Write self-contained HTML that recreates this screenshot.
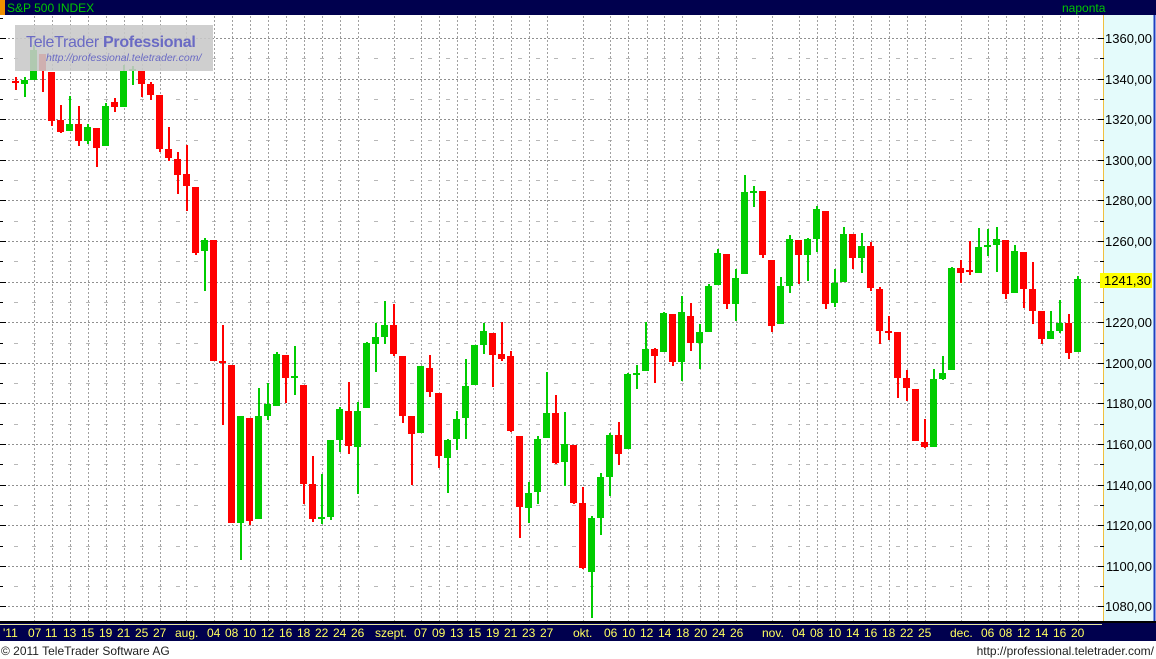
<!DOCTYPE html>
<html><head><meta charset="utf-8"><style>
html,body{margin:0;padding:0;background:#fff;width:1156px;height:659px;overflow:hidden;font-family:"Liberation Sans",sans-serif}
svg{display:block}
</style></head><body>
<svg width="1156" height="659" viewBox="0 0 1156 659" xmlns="http://www.w3.org/2000/svg" font-family="Liberation Sans, sans-serif">
<rect x="0" y="0" width="1156" height="659" fill="#fff"/>
<rect x="0" y="0" width="1156" height="15" fill="#00004e"/>
<rect x="0" y="0" width="5" height="15" fill="#f09000"/>
<text x="7" y="12" font-size="12" fill="#00c800">S&amp;P 500 INDEX</text>
<text x="1062" y="12" font-size="12" fill="#00c800">naponta</text>
<rect x="1103" y="15" width="51" height="607" fill="#e4fbfb"/>
<line x1="1103.5" y1="15" x2="1103.5" y2="622" stroke="#f0c040" stroke-width="1"/>
<line x1="1154.5" y1="15" x2="1154.5" y2="622" stroke="#2040c0" stroke-width="2"/>
<g stroke="#909090" stroke-width="1" stroke-dasharray="2,2">
<line x1="4" y1="38.5" x2="1098" y2="38.5"/><line x1="4" y1="79.5" x2="1098" y2="79.5"/><line x1="4" y1="119.5" x2="1098" y2="119.5"/><line x1="4" y1="160.5" x2="1098" y2="160.5"/><line x1="4" y1="200.5" x2="1098" y2="200.5"/><line x1="4" y1="241.5" x2="1098" y2="241.5"/><line x1="4" y1="282.5" x2="1098" y2="282.5"/><line x1="4" y1="322.5" x2="1098" y2="322.5"/><line x1="4" y1="363.5" x2="1098" y2="363.5"/><line x1="4" y1="403.5" x2="1098" y2="403.5"/><line x1="4" y1="444.5" x2="1098" y2="444.5"/><line x1="4" y1="485.5" x2="1098" y2="485.5"/><line x1="4" y1="525.5" x2="1098" y2="525.5"/><line x1="4" y1="566.5" x2="1098" y2="566.5"/><line x1="4" y1="606.5" x2="1098" y2="606.5"/>
</g>
<g stroke="#b8b8b8" stroke-width="1" stroke-dasharray="4,14">
<line x1="14" y1="58.5" x2="1098" y2="58.5"/><line x1="14" y1="99.5" x2="1098" y2="99.5"/><line x1="14" y1="140.5" x2="1098" y2="140.5"/><line x1="14" y1="180.5" x2="1098" y2="180.5"/><line x1="14" y1="221.5" x2="1098" y2="221.5"/><line x1="14" y1="261.5" x2="1098" y2="261.5"/><line x1="14" y1="302.5" x2="1098" y2="302.5"/><line x1="14" y1="343.5" x2="1098" y2="343.5"/><line x1="14" y1="383.5" x2="1098" y2="383.5"/><line x1="14" y1="424.5" x2="1098" y2="424.5"/><line x1="14" y1="464.5" x2="1098" y2="464.5"/><line x1="14" y1="505.5" x2="1098" y2="505.5"/><line x1="14" y1="546.5" x2="1098" y2="546.5"/><line x1="14" y1="586.5" x2="1098" y2="586.5"/>
</g>
<g stroke="#a0a0a0" stroke-width="1" stroke-dasharray="2,2">
<line x1="34.5" y1="16" x2="34.5" y2="622"/><line x1="52.5" y1="16" x2="52.5" y2="622"/><line x1="70.5" y1="16" x2="70.5" y2="622"/><line x1="88.5" y1="16" x2="88.5" y2="622"/><line x1="106.5" y1="16" x2="106.5" y2="622"/><line x1="124.5" y1="16" x2="124.5" y2="622"/><line x1="142.5" y1="16" x2="142.5" y2="622"/><line x1="160.5" y1="16" x2="160.5" y2="622"/><line x1="186.5" y1="16" x2="186.5" y2="622"/><line x1="214.5" y1="16" x2="214.5" y2="622"/><line x1="232.5" y1="16" x2="232.5" y2="622"/><line x1="250.5" y1="16" x2="250.5" y2="622"/><line x1="268.5" y1="16" x2="268.5" y2="622"/><line x1="286.5" y1="16" x2="286.5" y2="622"/><line x1="304.5" y1="16" x2="304.5" y2="622"/><line x1="322.5" y1="16" x2="322.5" y2="622"/><line x1="340.5" y1="16" x2="340.5" y2="622"/><line x1="358.5" y1="16" x2="358.5" y2="622"/><line x1="394.5" y1="16" x2="394.5" y2="622"/><line x1="421.5" y1="16" x2="421.5" y2="622"/><line x1="439.5" y1="16" x2="439.5" y2="622"/><line x1="457.5" y1="16" x2="457.5" y2="622"/><line x1="475.5" y1="16" x2="475.5" y2="622"/><line x1="493.5" y1="16" x2="493.5" y2="622"/><line x1="511.5" y1="16" x2="511.5" y2="622"/><line x1="529.5" y1="16" x2="529.5" y2="622"/><line x1="547.5" y1="16" x2="547.5" y2="622"/><line x1="583.5" y1="16" x2="583.5" y2="622"/><line x1="610.5" y1="16" x2="610.5" y2="622"/><line x1="628.5" y1="16" x2="628.5" y2="622"/><line x1="647.5" y1="16" x2="647.5" y2="622"/><line x1="664.5" y1="16" x2="664.5" y2="622"/><line x1="682.5" y1="16" x2="682.5" y2="622"/><line x1="700.5" y1="16" x2="700.5" y2="622"/><line x1="718.5" y1="16" x2="718.5" y2="622"/><line x1="736.5" y1="16" x2="736.5" y2="622"/><line x1="772.5" y1="16" x2="772.5" y2="622"/><line x1="799.5" y1="16" x2="799.5" y2="622"/><line x1="817.5" y1="16" x2="817.5" y2="622"/><line x1="835.5" y1="16" x2="835.5" y2="622"/><line x1="853.5" y1="16" x2="853.5" y2="622"/><line x1="871.5" y1="16" x2="871.5" y2="622"/><line x1="889.5" y1="16" x2="889.5" y2="622"/><line x1="907.5" y1="16" x2="907.5" y2="622"/><line x1="925.5" y1="16" x2="925.5" y2="622"/><line x1="961.5" y1="16" x2="961.5" y2="622"/><line x1="988.5" y1="16" x2="988.5" y2="622"/><line x1="1006.5" y1="16" x2="1006.5" y2="622"/><line x1="1024.5" y1="16" x2="1024.5" y2="622"/><line x1="1042.5" y1="16" x2="1042.5" y2="622"/><line x1="1060.5" y1="16" x2="1060.5" y2="622"/><line x1="1078.5" y1="16" x2="1078.5" y2="622"/>
</g>
<g stroke="#000" stroke-width="1">
<line x1="0" y1="18.5" x2="3" y2="18.5"/><line x1="0" y1="38.5" x2="6" y2="38.5"/><line x1="0" y1="58.5" x2="3" y2="58.5"/><line x1="0" y1="79.5" x2="6" y2="79.5"/><line x1="0" y1="99.5" x2="3" y2="99.5"/><line x1="0" y1="119.5" x2="6" y2="119.5"/><line x1="0" y1="140.5" x2="3" y2="140.5"/><line x1="0" y1="160.5" x2="6" y2="160.5"/><line x1="0" y1="180.5" x2="3" y2="180.5"/><line x1="0" y1="200.5" x2="6" y2="200.5"/><line x1="0" y1="221.5" x2="3" y2="221.5"/><line x1="0" y1="241.5" x2="6" y2="241.5"/><line x1="0" y1="261.5" x2="3" y2="261.5"/><line x1="0" y1="282.5" x2="6" y2="282.5"/><line x1="0" y1="302.5" x2="3" y2="302.5"/><line x1="0" y1="322.5" x2="6" y2="322.5"/><line x1="0" y1="343.5" x2="3" y2="343.5"/><line x1="0" y1="363.5" x2="6" y2="363.5"/><line x1="0" y1="383.5" x2="3" y2="383.5"/><line x1="0" y1="403.5" x2="6" y2="403.5"/><line x1="0" y1="424.5" x2="3" y2="424.5"/><line x1="0" y1="444.5" x2="6" y2="444.5"/><line x1="0" y1="464.5" x2="3" y2="464.5"/><line x1="0" y1="485.5" x2="6" y2="485.5"/><line x1="0" y1="505.5" x2="3" y2="505.5"/><line x1="0" y1="525.5" x2="6" y2="525.5"/><line x1="0" y1="546.5" x2="3" y2="546.5"/><line x1="0" y1="566.5" x2="6" y2="566.5"/><line x1="0" y1="586.5" x2="3" y2="586.5"/><line x1="0" y1="606.5" x2="6" y2="606.5"/>
</g>
<g stroke="#000" stroke-width="1">
<line x1="1098" y1="38.5" x2="1104" y2="38.5"/><line x1="1100" y1="58.5" x2="1104" y2="58.5"/><line x1="1098" y1="79.5" x2="1104" y2="79.5"/><line x1="1100" y1="99.5" x2="1104" y2="99.5"/><line x1="1098" y1="119.5" x2="1104" y2="119.5"/><line x1="1100" y1="140.5" x2="1104" y2="140.5"/><line x1="1098" y1="160.5" x2="1104" y2="160.5"/><line x1="1100" y1="180.5" x2="1104" y2="180.5"/><line x1="1098" y1="200.5" x2="1104" y2="200.5"/><line x1="1100" y1="221.5" x2="1104" y2="221.5"/><line x1="1098" y1="241.5" x2="1104" y2="241.5"/><line x1="1100" y1="261.5" x2="1104" y2="261.5"/><line x1="1098" y1="282.5" x2="1104" y2="282.5"/><line x1="1100" y1="302.5" x2="1104" y2="302.5"/><line x1="1098" y1="322.5" x2="1104" y2="322.5"/><line x1="1100" y1="343.5" x2="1104" y2="343.5"/><line x1="1098" y1="363.5" x2="1104" y2="363.5"/><line x1="1100" y1="383.5" x2="1104" y2="383.5"/><line x1="1098" y1="403.5" x2="1104" y2="403.5"/><line x1="1100" y1="424.5" x2="1104" y2="424.5"/><line x1="1098" y1="444.5" x2="1104" y2="444.5"/><line x1="1100" y1="464.5" x2="1104" y2="464.5"/><line x1="1098" y1="485.5" x2="1104" y2="485.5"/><line x1="1100" y1="505.5" x2="1104" y2="505.5"/><line x1="1098" y1="525.5" x2="1104" y2="525.5"/><line x1="1100" y1="546.5" x2="1104" y2="546.5"/><line x1="1098" y1="566.5" x2="1104" y2="566.5"/><line x1="1100" y1="586.5" x2="1104" y2="586.5"/><line x1="1098" y1="606.5" x2="1104" y2="606.5"/>
</g>
<g font-size="13" fill="#000" text-anchor="end">
<text x="1152" y="43">1360,00</text><text x="1152" y="84">1340,00</text><text x="1152" y="124">1320,00</text><text x="1152" y="165">1300,00</text><text x="1152" y="205">1280,00</text><text x="1152" y="246">1260,00</text><text x="1152" y="327">1220,00</text><text x="1152" y="368">1200,00</text><text x="1152" y="408">1180,00</text><text x="1152" y="449">1160,00</text><text x="1152" y="490">1140,00</text><text x="1152" y="530">1120,00</text><text x="1152" y="571">1100,00</text><text x="1152" y="611">1080,00</text>
</g>
<rect x="1100" y="273" width="52" height="15" fill="#ffff00"/>
<text x="1151" y="285" font-size="13" fill="#000" text-anchor="end">1241,30</text>
<g>
<rect x="15" y="77" width="2" height="13" fill="#f00"/><rect x="12" y="81" width="7" height="2" fill="#f00"/>
<rect x="24" y="77" width="2" height="20" fill="#0c0"/><rect x="21" y="80" width="7" height="4" fill="#0c0"/>
<rect x="33" y="45" width="2" height="35" fill="#0c0"/><rect x="30" y="50" width="7" height="30" fill="#0c0"/>
<rect x="42" y="54" width="2" height="38" fill="#f00"/><rect x="39" y="54" width="7" height="17" fill="#f00"/>
<rect x="51" y="72" width="2" height="54" fill="#f00"/><rect x="48" y="72" width="7" height="49" fill="#f00"/>
<rect x="60" y="105" width="2" height="28" fill="#f00"/><rect x="57" y="120" width="7" height="12" fill="#f00"/>
<rect x="69" y="96" width="2" height="35" fill="#0c0"/><rect x="66" y="124" width="7" height="7" fill="#0c0"/>
<rect x="78" y="106" width="2" height="40" fill="#f00"/><rect x="75" y="124" width="7" height="17" fill="#f00"/>
<rect x="87" y="124" width="2" height="20" fill="#0c0"/><rect x="84" y="127" width="7" height="14" fill="#0c0"/>
<rect x="96" y="128" width="2" height="39" fill="#f00"/><rect x="93" y="128" width="7" height="20" fill="#f00"/>
<rect x="105" y="103" width="2" height="43" fill="#0c0"/><rect x="102" y="106" width="7" height="40" fill="#0c0"/>
<rect x="114" y="98" width="2" height="14" fill="#f00"/><rect x="111" y="102" width="7" height="5" fill="#f00"/>
<rect x="123" y="65" width="2" height="42" fill="#0c0"/><rect x="120" y="71" width="7" height="36" fill="#0c0"/>
<rect x="132" y="66" width="2" height="19" fill="#0c0"/><rect x="129" y="69" width="7" height="2" fill="#0c0"/>
<rect x="141" y="71" width="2" height="26" fill="#f00"/><rect x="138" y="71" width="7" height="13" fill="#f00"/>
<rect x="150" y="82" width="2" height="18" fill="#f00"/><rect x="147" y="84" width="7" height="11" fill="#f00"/>
<rect x="159" y="95" width="2" height="57" fill="#f00"/><rect x="156" y="95" width="7" height="54" fill="#f00"/>
<rect x="168" y="127" width="2" height="34" fill="#f00"/><rect x="165" y="149" width="7" height="9" fill="#f00"/>
<rect x="177" y="152" width="2" height="42" fill="#f00"/><rect x="174" y="159" width="7" height="16" fill="#f00"/>
<rect x="186" y="145" width="2" height="66" fill="#f00"/><rect x="183" y="174" width="7" height="12" fill="#f00"/>
<rect x="195" y="187" width="2" height="68" fill="#f00"/><rect x="192" y="187" width="7" height="66" fill="#f00"/>
<rect x="204" y="238" width="2" height="53" fill="#0c0"/><rect x="201" y="240" width="7" height="11" fill="#0c0"/>
<rect x="213" y="240" width="2" height="121" fill="#f00"/><rect x="210" y="240" width="7" height="121" fill="#f00"/>
<rect x="222" y="325" width="2" height="100" fill="#f00"/><rect x="219" y="361" width="7" height="2" fill="#f00"/>
<rect x="231" y="365" width="2" height="158" fill="#f00"/><rect x="228" y="365" width="7" height="158" fill="#f00"/>
<rect x="240" y="416" width="2" height="144" fill="#0c0"/><rect x="237" y="416" width="7" height="107" fill="#0c0"/>
<rect x="249" y="418" width="2" height="107" fill="#f00"/><rect x="246" y="418" width="7" height="103" fill="#f00"/>
<rect x="258" y="388" width="2" height="131" fill="#0c0"/><rect x="255" y="416" width="7" height="103" fill="#0c0"/>
<rect x="267" y="383" width="2" height="37" fill="#0c0"/><rect x="264" y="404" width="7" height="12" fill="#0c0"/>
<rect x="276" y="352" width="2" height="54" fill="#0c0"/><rect x="273" y="354" width="7" height="52" fill="#0c0"/>
<rect x="285" y="355" width="2" height="48" fill="#f00"/><rect x="282" y="355" width="7" height="23" fill="#f00"/>
<rect x="294" y="346" width="2" height="49" fill="#0c0"/><rect x="291" y="376" width="7" height="2" fill="#0c0"/>
<rect x="303" y="385" width="2" height="119" fill="#f00"/><rect x="300" y="385" width="7" height="99" fill="#f00"/>
<rect x="312" y="456" width="2" height="66" fill="#f00"/><rect x="309" y="484" width="7" height="35" fill="#f00"/>
<rect x="321" y="474" width="2" height="50" fill="#0c0"/><rect x="318" y="517" width="7" height="2" fill="#0c0"/>
<rect x="330" y="440" width="2" height="80" fill="#0c0"/><rect x="327" y="440" width="7" height="77" fill="#0c0"/>
<rect x="339" y="407" width="2" height="45" fill="#0c0"/><rect x="336" y="409" width="7" height="31" fill="#0c0"/>
<rect x="348" y="382" width="2" height="72" fill="#f00"/><rect x="345" y="411" width="7" height="35" fill="#f00"/>
<rect x="357" y="402" width="2" height="92" fill="#0c0"/><rect x="354" y="411" width="7" height="36" fill="#0c0"/>
<rect x="366" y="342" width="2" height="66" fill="#0c0"/><rect x="363" y="343" width="7" height="65" fill="#0c0"/>
<rect x="375" y="323" width="2" height="49" fill="#0c0"/><rect x="372" y="337" width="7" height="7" fill="#0c0"/>
<rect x="384" y="301" width="2" height="43" fill="#0c0"/><rect x="381" y="325" width="7" height="12" fill="#0c0"/>
<rect x="393" y="304" width="2" height="52" fill="#f00"/><rect x="390" y="325" width="7" height="29" fill="#f00"/>
<rect x="402" y="356" width="2" height="67" fill="#f00"/><rect x="399" y="356" width="7" height="60" fill="#f00"/>
<rect x="411" y="416" width="2" height="69" fill="#f00"/><rect x="408" y="416" width="7" height="18" fill="#f00"/>
<rect x="420" y="366" width="2" height="67" fill="#0c0"/><rect x="417" y="366" width="7" height="67" fill="#0c0"/>
<rect x="429" y="355" width="2" height="42" fill="#f00"/><rect x="426" y="368" width="7" height="24" fill="#f00"/>
<rect x="438" y="393" width="2" height="75" fill="#f00"/><rect x="435" y="393" width="7" height="63" fill="#f00"/>
<rect x="447" y="439" width="2" height="54" fill="#0c0"/><rect x="444" y="440" width="7" height="18" fill="#0c0"/>
<rect x="456" y="411" width="2" height="39" fill="#0c0"/><rect x="453" y="419" width="7" height="20" fill="#0c0"/>
<rect x="465" y="359" width="2" height="80" fill="#0c0"/><rect x="462" y="386" width="7" height="32" fill="#0c0"/>
<rect x="474" y="345" width="2" height="40" fill="#0c0"/><rect x="471" y="345" width="7" height="40" fill="#0c0"/>
<rect x="483" y="323" width="2" height="31" fill="#0c0"/><rect x="480" y="331" width="7" height="14" fill="#0c0"/>
<rect x="492" y="333" width="2" height="54" fill="#f00"/><rect x="489" y="333" width="7" height="22" fill="#f00"/>
<rect x="501" y="322" width="2" height="39" fill="#f00"/><rect x="498" y="354" width="7" height="5" fill="#f00"/>
<rect x="510" y="351" width="2" height="81" fill="#f00"/><rect x="507" y="356" width="7" height="75" fill="#f00"/>
<rect x="519" y="436" width="2" height="102" fill="#f00"/><rect x="516" y="436" width="7" height="71" fill="#f00"/>
<rect x="528" y="482" width="2" height="41" fill="#0c0"/><rect x="525" y="493" width="7" height="15" fill="#0c0"/>
<rect x="537" y="436" width="2" height="68" fill="#0c0"/><rect x="534" y="439" width="7" height="53" fill="#0c0"/>
<rect x="546" y="372" width="2" height="66" fill="#0c0"/><rect x="543" y="413" width="7" height="25" fill="#0c0"/>
<rect x="555" y="395" width="2" height="69" fill="#f00"/><rect x="552" y="413" width="7" height="50" fill="#f00"/>
<rect x="564" y="412" width="2" height="74" fill="#0c0"/><rect x="561" y="444" width="7" height="18" fill="#0c0"/>
<rect x="573" y="445" width="2" height="59" fill="#f00"/><rect x="570" y="445" width="7" height="58" fill="#f00"/>
<rect x="582" y="487" width="2" height="82" fill="#f00"/><rect x="579" y="503" width="7" height="65" fill="#f00"/>
<rect x="591" y="516" width="2" height="102" fill="#0c0"/><rect x="588" y="518" width="7" height="54" fill="#0c0"/>
<rect x="600" y="473" width="2" height="62" fill="#0c0"/><rect x="597" y="477" width="7" height="41" fill="#0c0"/>
<rect x="609" y="433" width="2" height="63" fill="#0c0"/><rect x="606" y="435" width="7" height="42" fill="#0c0"/>
<rect x="618" y="422" width="2" height="43" fill="#f00"/><rect x="615" y="435" width="7" height="19" fill="#f00"/>
<rect x="627" y="373" width="2" height="76" fill="#0c0"/><rect x="624" y="374" width="7" height="75" fill="#0c0"/>
<rect x="636" y="365" width="2" height="24" fill="#0c0"/><rect x="633" y="373" width="7" height="2" fill="#0c0"/>
<rect x="645" y="322" width="2" height="49" fill="#0c0"/><rect x="642" y="349" width="7" height="22" fill="#0c0"/>
<rect x="654" y="348" width="2" height="35" fill="#f00"/><rect x="651" y="349" width="7" height="7" fill="#f00"/>
<rect x="663" y="312" width="2" height="40" fill="#0c0"/><rect x="660" y="313" width="7" height="39" fill="#0c0"/>
<rect x="672" y="314" width="2" height="52" fill="#f00"/><rect x="669" y="314" width="7" height="48" fill="#f00"/>
<rect x="681" y="296" width="2" height="85" fill="#0c0"/><rect x="678" y="312" width="7" height="50" fill="#0c0"/>
<rect x="690" y="303" width="2" height="48" fill="#f00"/><rect x="687" y="316" width="7" height="27" fill="#f00"/>
<rect x="699" y="324" width="2" height="45" fill="#0c0"/><rect x="696" y="332" width="7" height="11" fill="#0c0"/>
<rect x="708" y="284" width="2" height="48" fill="#0c0"/><rect x="705" y="286" width="7" height="46" fill="#0c0"/>
<rect x="717" y="249" width="2" height="36" fill="#0c0"/><rect x="714" y="253" width="7" height="32" fill="#0c0"/>
<rect x="726" y="254" width="2" height="55" fill="#f00"/><rect x="723" y="254" width="7" height="50" fill="#f00"/>
<rect x="735" y="269" width="2" height="52" fill="#0c0"/><rect x="732" y="278" width="7" height="26" fill="#0c0"/>
<rect x="744" y="175" width="2" height="99" fill="#0c0"/><rect x="741" y="192" width="7" height="82" fill="#0c0"/>
<rect x="753" y="186" width="2" height="21" fill="#0c0"/><rect x="750" y="191" width="7" height="2" fill="#0c0"/>
<rect x="762" y="191" width="2" height="67" fill="#f00"/><rect x="759" y="191" width="7" height="64" fill="#f00"/>
<rect x="771" y="260" width="2" height="72" fill="#f00"/><rect x="768" y="260" width="7" height="66" fill="#f00"/>
<rect x="780" y="277" width="2" height="47" fill="#0c0"/><rect x="777" y="286" width="7" height="38" fill="#0c0"/>
<rect x="789" y="235" width="2" height="58" fill="#0c0"/><rect x="786" y="239" width="7" height="47" fill="#0c0"/>
<rect x="798" y="240" width="2" height="44" fill="#f00"/><rect x="795" y="240" width="7" height="15" fill="#f00"/>
<rect x="807" y="238" width="2" height="43" fill="#0c0"/><rect x="804" y="239" width="7" height="16" fill="#0c0"/>
<rect x="816" y="206" width="2" height="46" fill="#0c0"/><rect x="813" y="209" width="7" height="30" fill="#0c0"/>
<rect x="825" y="211" width="2" height="98" fill="#f00"/><rect x="822" y="211" width="7" height="93" fill="#f00"/>
<rect x="834" y="269" width="2" height="38" fill="#0c0"/><rect x="831" y="283" width="7" height="20" fill="#0c0"/>
<rect x="843" y="227" width="2" height="55" fill="#0c0"/><rect x="840" y="234" width="7" height="48" fill="#0c0"/>
<rect x="852" y="234" width="2" height="35" fill="#f00"/><rect x="849" y="234" width="7" height="24" fill="#f00"/>
<rect x="861" y="233" width="2" height="40" fill="#0c0"/><rect x="858" y="246" width="7" height="12" fill="#0c0"/>
<rect x="870" y="242" width="2" height="49" fill="#f00"/><rect x="867" y="246" width="7" height="42" fill="#f00"/>
<rect x="879" y="287" width="2" height="57" fill="#f00"/><rect x="876" y="289" width="7" height="42" fill="#f00"/>
<rect x="888" y="316" width="2" height="24" fill="#f00"/><rect x="885" y="331" width="7" height="2" fill="#f00"/>
<rect x="897" y="332" width="2" height="66" fill="#f00"/><rect x="894" y="332" width="7" height="46" fill="#f00"/>
<rect x="906" y="370" width="2" height="31" fill="#f00"/><rect x="903" y="378" width="7" height="10" fill="#f00"/>
<rect x="915" y="389" width="2" height="52" fill="#f00"/><rect x="912" y="389" width="7" height="52" fill="#f00"/>
<rect x="924" y="419" width="2" height="29" fill="#f00"/><rect x="921" y="442" width="7" height="5" fill="#f00"/>
<rect x="933" y="369" width="2" height="78" fill="#0c0"/><rect x="930" y="379" width="7" height="68" fill="#0c0"/>
<rect x="942" y="356" width="2" height="24" fill="#0c0"/><rect x="939" y="373" width="7" height="6" fill="#0c0"/>
<rect x="951" y="267" width="2" height="103" fill="#0c0"/><rect x="948" y="268" width="7" height="102" fill="#0c0"/>
<rect x="960" y="260" width="2" height="23" fill="#f00"/><rect x="957" y="268" width="7" height="5" fill="#f00"/>
<rect x="969" y="241" width="2" height="34" fill="#f00"/><rect x="966" y="270" width="7" height="2" fill="#f00"/>
<rect x="978" y="228" width="2" height="45" fill="#0c0"/><rect x="975" y="247" width="7" height="26" fill="#0c0"/>
<rect x="987" y="229" width="2" height="27" fill="#0c0"/><rect x="984" y="245" width="7" height="2" fill="#0c0"/>
<rect x="996" y="227" width="2" height="45" fill="#0c0"/><rect x="993" y="239" width="7" height="6" fill="#0c0"/>
<rect x="1005" y="240" width="2" height="59" fill="#f00"/><rect x="1002" y="240" width="7" height="54" fill="#f00"/>
<rect x="1014" y="245" width="2" height="48" fill="#0c0"/><rect x="1011" y="251" width="7" height="42" fill="#0c0"/>
<rect x="1023" y="252" width="2" height="56" fill="#f00"/><rect x="1020" y="252" width="7" height="37" fill="#f00"/>
<rect x="1032" y="262" width="2" height="62" fill="#f00"/><rect x="1029" y="289" width="7" height="22" fill="#f00"/>
<rect x="1041" y="311" width="2" height="33" fill="#f00"/><rect x="1038" y="311" width="7" height="28" fill="#f00"/>
<rect x="1050" y="311" width="2" height="28" fill="#0c0"/><rect x="1047" y="331" width="7" height="8" fill="#0c0"/>
<rect x="1059" y="300" width="2" height="33" fill="#0c0"/><rect x="1056" y="323" width="7" height="8" fill="#0c0"/>
<rect x="1068" y="314" width="2" height="45" fill="#f00"/><rect x="1065" y="323" width="7" height="30" fill="#f00"/>
<rect x="1077" y="276" width="2" height="76" fill="#0c0"/><rect x="1074" y="279" width="7" height="73" fill="#0c0"/>
</g>
<rect x="15" y="25" width="198" height="46" fill="#c8c8c8" opacity="0.88"/>
<text x="26" y="47" font-size="16" fill="#6a6ac4" letter-spacing="-0.3">TeleTrader <tspan font-weight="bold">Professional</tspan></text>
<text x="46" y="61" font-size="10.5" font-style="italic" fill="#6a6ac4">http://professional.teletrader.com/</text>
<rect x="0" y="621" width="1156" height="2" fill="#000"/>
<rect x="0" y="623" width="1156" height="18" fill="#00004e"/>
<line x1="0" y1="624.5" x2="1102" y2="624.5" stroke="#e8e8a0" stroke-width="1"/>
<g font-size="12" fill="#ffff60">
<text x="3" y="637">'11</text><text x="28" y="637">07</text><text x="45" y="637">11</text><text x="63" y="637">13</text><text x="81" y="637">15</text><text x="99" y="637">19</text><text x="117" y="637">21</text><text x="135" y="637">25</text><text x="153" y="637">27</text><text x="175" y="637">aug.</text><text x="207" y="637">04</text><text x="225" y="637">08</text><text x="243" y="637">10</text><text x="261" y="637">12</text><text x="279" y="637">16</text><text x="297" y="637">18</text><text x="315" y="637">22</text><text x="333" y="637">24</text><text x="351" y="637">26</text><text x="375" y="637">szept.</text><text x="414" y="637">07</text><text x="432" y="637">09</text><text x="450" y="637">13</text><text x="468" y="637">15</text><text x="486" y="637">19</text><text x="504" y="637">21</text><text x="522" y="637">23</text><text x="540" y="637">27</text><text x="573" y="637">okt.</text><text x="604" y="637">06</text><text x="622" y="637">10</text><text x="640" y="637">12</text><text x="658" y="637">14</text><text x="676" y="637">18</text><text x="694" y="637">20</text><text x="712" y="637">24</text><text x="730" y="637">26</text><text x="762" y="637">nov.</text><text x="792" y="637">04</text><text x="810" y="637">08</text><text x="828" y="637">10</text><text x="846" y="637">14</text><text x="864" y="637">16</text><text x="882" y="637">18</text><text x="900" y="637">22</text><text x="918" y="637">25</text><text x="950" y="637">dec.</text><text x="981" y="637">06</text><text x="999" y="637">08</text><text x="1017" y="637">12</text><text x="1035" y="637">14</text><text x="1053" y="637">16</text><text x="1071" y="637">20</text>
</g>
<text x="1" y="655" font-size="12" fill="#222">© 2011 TeleTrader Software AG</text>
<text x="1154" y="655" font-size="12" fill="#222" text-anchor="end">http://professional.teletrader.com/</text>
</svg>
</body></html>
